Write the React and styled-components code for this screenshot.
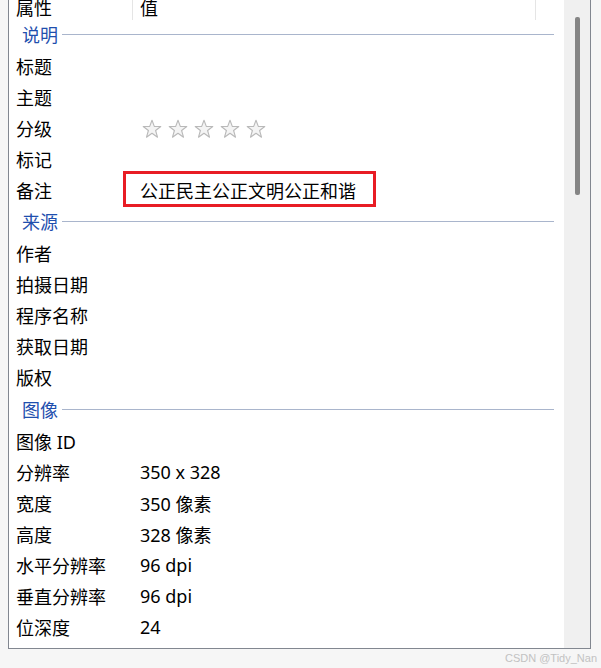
import React from "react";
import styled, { createGlobalStyle } from "styled-components";

const GlobalStyle = createGlobalStyle`
  html, body {
    margin: 0;
    padding: 0;
    background: #f6f6f6;
  }
  body {
    font-family: "Noto Sans", "Noto Sans CJK SC", sans-serif;
    color: #000;
  }
`;

const groups = [
  {
    title: "说明",
    h: 30,
    rows: [
      { label: "标题" },
      { label: "主题" },
      { label: "分级", stars: 5 },
      { label: "标记" },
      { label: "备注", value: "公正民主公正文明公正和谐", marked: true },
    ],
  },
  {
    title: "来源",
    h: 32,
    rows: [
      { label: "作者" },
      { label: "拍摄日期" },
      { label: "程序名称" },
      { label: "获取日期" },
      { label: "版权" },
    ],
  },
  {
    title: "图像",
    h: 33,
    rows: [
      { label: "图像 ID" },
      { label: "分辨率", value: "350 x 328" },
      { label: "宽度", value: "350 像素" },
      { label: "高度", value: "328 像素" },
      { label: "水平分辨率", value: "96 dpi" },
      { label: "垂直分辨率", value: "96 dpi" },
      { label: "位深度", value: "24" },
    ],
  },
];

function Star() {
  return (
    <svg width="20" height="20" viewBox="0 0 20 20">
      <polygon
        points="10,1.2 12.3,7.4 18.8,7.5 13.6,11.5 15.5,18.2 10,14.3 4.5,18.2 6.4,11.5 1.2,7.5 7.7,7.4"
        fill="#f4f4f4"
        stroke="#b9b9b9"
        strokeWidth="1.1"
        strokeLinejoin="round"
      />
    </svg>
  );
}

export default function App() {
  return (
    <>
      <GlobalStyle />
      <Frame>
        <ListArea>
          <HeaderRow>
            <HeadCell $w={124}>属性</HeadCell>
            <HeadCell $w={403}>值</HeadCell>
          </HeaderRow>
          {groups.map((g) => (
            <React.Fragment key={g.title}>
              <GroupRow $h={g.h}>
                <GroupTitle>{g.title}</GroupTitle>
                <GroupLine />
              </GroupRow>
              {g.rows.map((r) => (
                <Row key={r.label}>
                  <Label>{r.label}</Label>
                  <Value>
                    {r.stars ? (
                      <Stars>
                        {Array.from({ length: r.stars }, (_, i) => (
                          <Star key={i} />
                        ))}
                      </Stars>
                    ) : null}
                    {r.value}
                    {r.marked ? <Mark /> : null}
                  </Value>
                </Row>
              ))}
            </React.Fragment>
          ))}
        </ListArea>
        <ScrollTrack>
          <Thumb />
        </ScrollTrack>
      </Frame>
      <Watermark>CSDN @Tidy_Nan</Watermark>
    </>
  );
}

const Frame = styled.div`
  margin-left: 8px;
  width: 581px;
  height: 648px;
  border: 1px solid #828790;
  border-top: none;
  display: flex;
  background: #fff;
  overflow: hidden;
`;

const ListArea = styled.div`
  flex: 1;
  background: #fff;
  display: flex;
  flex-direction: column;
`;

const HeaderRow = styled.div`
  display: flex;
  height: 20px;
  flex-shrink: 0;
`;

const HeadCell = styled.div`
  box-sizing: border-box;
  width: ${(p) => p.$w}px;
  padding-left: 7px;
  border-right: 1px solid #e5e5e5;
  height: 20px;
  font-size: 18px;
  line-height: 16px;
`;

const GroupRow = styled.div`
  display: flex;
  align-items: flex-end;
  height: ${(p) => p.$h}px;
  flex-shrink: 0;
  padding-left: 13px;
  padding-right: 10px;
`;

const GroupTitle = styled.span`
  color: #1f4fae;
  font-size: 18px;
  line-height: 29px;
  margin-right: 4px;
`;

const GroupLine = styled.div`
  flex: 1;
  height: 1px;
  background: #a9b5cc;
  margin-bottom: 15px;
`;

const Row = styled.div`
  display: flex;
  align-items: center;
  height: 31px;
  flex-shrink: 0;
  font-size: 18px;
`;

const Label = styled.div`
  width: 124px;
  padding-left: 7px;
  white-space: nowrap;
`;

const Value = styled.div`
  position: relative;
  white-space: nowrap;
`;

const Stars = styled.div`
  display: flex;
  gap: 6px;
  padding-left: 2px;
  padding-top: 2px;
`;

const Mark = styled.div`
  position: absolute;
  left: -17px;
  top: 50%;
  margin-top: -19px;
  width: 247px;
  height: 30px;
  border: 3px solid #e81c24;
`;

const ScrollTrack = styled.div`
  width: 26px;
  background: #f0f0f0;
  display: flex;
  justify-content: center;
  padding-top: 17px;
`;

const Thumb = styled.div`
  width: 5px;
  height: 178px;
  border-radius: 2px;
  background: #858585;
`;

const Watermark = styled.div`
  text-align: right;
  padding-right: 4px;
  font-family: "Liberation Sans", sans-serif;
  font-size: 11px;
  line-height: 18px;
  color: #c2c2c2;
`;
